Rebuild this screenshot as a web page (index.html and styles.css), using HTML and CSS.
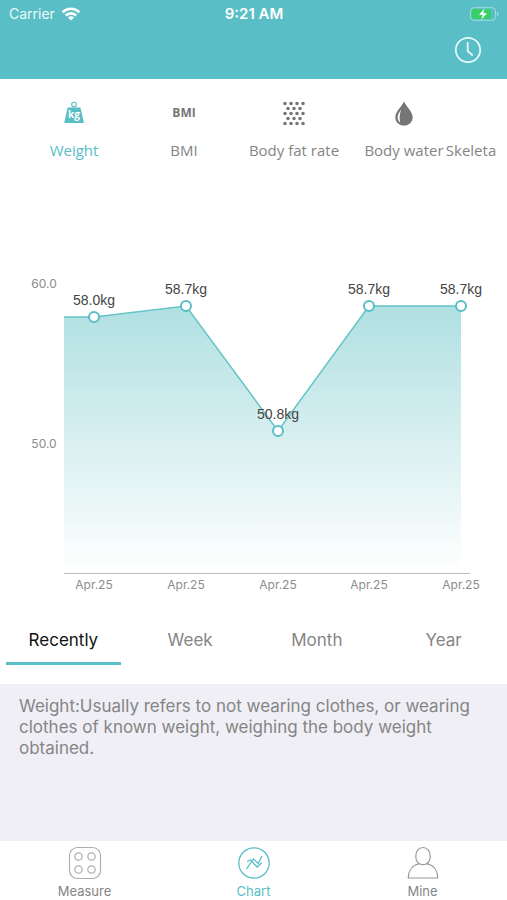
FILE: index.html
```html
<!DOCTYPE html>
<html lang="en">
<head>
    <meta charset="UTF-8">
    <meta name="viewport" content="width=device-width, initial-scale=1.0">
    <title>Chart</title>
    <link rel="stylesheet" href="styles.css">
</head>
<body>
<header class="header">
    <div class="status-bar">
        <div class="carrier">
            <span>Carrier</span>
            <svg width="20" height="16" viewBox="0 0 20 16" fill="none" stroke="#fff" stroke-width="2.6">
                <path d="M1.6 6.2a12 12 0 0 1 16.8 0"/>
                <path d="M4.7 9.5a7.6 7.6 0 0 1 10.6 0"/>
                <path d="M10 14.6l-3-3a4.3 4.3 0 0 1 6 0z" fill="#fff" stroke="none"/>
            </svg>
        </div>
        <div class="time">9:21 AM</div>
        <div class="battery">
            <svg width="30" height="14" viewBox="0 0 30 14">
                <rect x="1.5" y="0.7" width="25" height="12.6" rx="3.4" fill="none" stroke="#a3dbe0"/>
                <rect x="2.5" y="2" width="19.5" height="10" rx="2" fill="#36cf68"/>
                <path d="M28 4.5c2 .8 2 4.2 0 5z" fill="#a3dbe0"/>
                <path d="M15.6 1.5L10 7.7h3.6l-1.200 4.8L18 6.300h-3.600z" fill="#fff"/>
            </svg>
        </div>
    </div>
    <div class="toolbar">
        <button class="history" type="button" aria-label="History">
            <svg width="28" height="28" viewBox="0 0 28 28" fill="none" stroke="#e9fafb" stroke-width="1.7">
                <circle cx="14" cy="14" r="12.2"/>
                <path d="M13.700 6v9l5 4.500"/>
            </svg>
        </button>
    </div>
</header>

<nav class="metrics">
    <button class="metric active" type="button">
        <svg width="28" height="28" viewBox="0 0 28 28">
            <circle cx="14" cy="5.5" r="2.300" fill="none" stroke="currentColor" stroke-width="1.1"/>
            <path d="M7.6 8.500h12.800L24 24H4.200z" fill="currentColor"/>
            <text class="kg" x="14" y="19" text-anchor="middle">kg</text>
        </svg>
        <span>Weight</span>
    </button>
    <button class="metric" type="button">
        <b class="bmi">BMI</b>
        <span>BMI</span>
    </button>
    <button class="metric" type="button">
        <svg width="28" height="28" viewBox="0 0 28 28" fill="none" stroke="#757575" stroke-width="3.6" stroke-linecap="round">
            <path d="M5 4.500h19M5 14.500h19M5 24.500h19" stroke-dasharray="0 6"/>
            <path d="M8 9.500h13M8 19.500h13" stroke-dasharray="0 6"/>
        </svg>
        <span>Body fat rate</span>
    </button>
    <button class="metric" type="button">
        <svg width="28" height="28" viewBox="0 0 28 28">
            <path d="M14 2.500C11.500 8 5.300 12.700 5.300 18.200c0 5 3.900 8.300 8.700 8.300s8.700-3.300 8.700-8.300C22.700 12.700 16.500 8 14 2.500z" fill="#757575"/>
            <path d="M11.200 10.500C8.600 14.200 7.400 16.500 7.700 19.200c.2 2 1.200 3.500 2.600 4.400-1.300-4.200-.7-8 .9-13.100z" fill="#fff"/>
        </svg>
        <span>Body water</span>
    </button>
    <button class="metric" type="button">
        <span>Skeleta</span>
    </button>
</nav>

<main>
    <svg class="chart" viewBox="0 0 507 440" role="img" aria-label="Weight chart">
        <defs>
            <linearGradient id="fill" x1="0" y1="0" x2="0" y2="1">
                <stop offset="0" stop-color="#b0e0e2"/>
                <stop offset="0.5" stop-color="#d8eff0"/>
                <stop offset="1" stop-color="#ffffff"/>
            </linearGradient>
        </defs>
        <path d="M64 147L94 147L186 136L278 261L369 136L461 136V402H64z" fill="url(#fill)"/>
        <path class="axis" d="M64 403H470"/>
        <path class="line" d="M64 147L94 147L186 136L278 261L369 136L461 136"/>
        <g class="dots">
            <circle cx="94" cy="147" r="5"/>
            <circle cx="186" cy="136" r="5"/>
            <circle cx="278" cy="261" r="5"/>
            <circle cx="369" cy="136" r="5"/>
            <circle cx="461" cy="136" r="5"/>
        </g>
        <g class="values">
            <text x="94" y="135">58.0kg</text>
            <text x="186" y="124">58.7kg</text>
            <text x="278" y="249">50.8kg</text>
            <text x="369" y="124">58.7kg</text>
            <text x="461" y="124">58.7kg</text>
        </g>
        <g class="scale">
            <text x="44" y="118">60.0</text>
            <text x="44" y="278">50.0</text>
            <text x="94" y="419">Apr.25</text>
            <text x="186" y="419">Apr.25</text>
            <text x="278" y="419">Apr.25</text>
            <text x="369" y="419">Apr.25</text>
            <text x="461" y="419">Apr.25</text>
        </g>
    </svg>

    <div class="periods">
        <button class="period active" type="button">Recently</button>
        <button class="period" type="button">Week</button>
        <button class="period" type="button">Month</button>
        <button class="period" type="button">Year</button>
    </div>

    <p class="description">Weight:Usually refers to not wearing clothes, or wearing clothes of known weight, weighing the body weight obtained.</p>
</main>

<nav class="tab-bar">
    <a class="tab" href="#">
        <svg width="34" height="34" viewBox="0 0 34 34" fill="none" stroke="#adadad" stroke-width="1.2">
            <rect x="1.5" y="1.5" width="31" height="31" rx="8"/>
            <circle cx="10.5" cy="10.5" r="3.7"/>
            <circle cx="23.5" cy="10.5" r="3.7"/>
            <circle cx="10.5" cy="23.5" r="3.7"/>
            <circle cx="23.5" cy="23.5" r="3.7"/>
        </svg>
        <span>Measure</span>
    </a>
    <a class="tab active" href="#">
        <svg width="34" height="34" viewBox="0 0 34 34" fill="none" stroke="currentColor" stroke-width="1.3">
            <circle cx="17" cy="17" r="15.2"/>
            <path d="M9.500 23l6.800-10 5 4.500L25 10"/>
            <path d="M10 15.500l3.500-1.500 6.500 7 5-4.500"/>
        </svg>
        <span>Chart</span>
    </a>
    <a class="tab" href="#">
        <svg width="34" height="34" viewBox="0 0 34 34" fill="none" stroke="#999" stroke-width="1.2">
            <path d="M13.500 17.700C11 16.500 9.800 13.500 9.800 10c0-5 3-8.500 7.200-8.500s7.200 3.500 7.200 8.500c0 3.500-1.200 6.500-3.700 7.700"/>
            <path d="M13.500 17.700C6.500 19 2.300 24.500 2.300 32h29.400c0-7.500-4.200-13-11.200-14.300-2.200 1.200-4.800 1.200-7 0z"/>
        </svg>
        <span>Mine</span>
    </a>
</nav>
</body>
</html>
```
FILE: styles.css
```css
* {
    box-sizing: border-box;
}
body {
    min-height: 100vh;
    margin: 0;
    font-family: Inter, "Liberation Sans", sans-serif;
    background-color: #fff;
    color: #858585;
    display: flex;
    flex-direction: column;
}
button {
    padding: 0;
    border: 0;
    background: none;
    font: inherit;
    color: inherit;
    cursor: pointer;
}
svg {
    display: block;
}
.header {
    background-color: #59bec5;
    color: #fff;
}
.status-bar {
    display: grid;
    grid-template-columns: 1fr auto 1fr;
    align-items: center;
    height: 27px;
    padding: 0 8px 0 9px;
    font-size: 14px;
}
.carrier {
    display: flex;
    align-items: center;
    gap: 6px;
    color: #e9fafb;
}
.time {
    font-size: 15px;
    font-weight: 600;
}
.battery {
    justify-self: end;
}
.toolbar {
    display: flex;
    justify-content: flex-end;
    padding: 9px 25px 15px;
}
.metrics {
    display: grid;
    grid-template-columns: repeat(4, minmax(0, 110fr)) minmax(0, 24fr);
    padding: 20px 24px 9px 19px;
    font-family: "Open Sans", "Noto Sans", sans-serif;
    font-size: 15px;
    line-height: 22px;
}
.metric {
    display: flex;
    flex-direction: column;
    justify-content: flex-end;
    align-items: center;
    gap: 12px;
    height: 62px;
    white-space: nowrap;
}
.metric.active,
.tab.active {
    color: #59bec5;
}
.kg {
    fill: #fff;
    font-size: 10px;
    font-weight: bold;
}
.bmi {
    font-size: 12px;
    line-height: 28px;
    color: #757575;
}
main {
    flex: 1;
    display: flex;
    flex-direction: column;
}
.chart {
    width: 100%;
    height: auto;
}
.axis {
    stroke: #bdbdbd;
    shape-rendering: crispEdges;
}
.line {
    fill: none;
    stroke: #65c4c5;
    stroke-width: 1.5;
}
.dots {
    fill: #fff;
    stroke: #59bec5;
    stroke-width: 2;
}
.values {
    font-family: "Liberation Sans", sans-serif;
    font-size: 14px;
    fill: #444;
    text-anchor: middle;
}
.scale {
    font-size: 12px;
    fill: #8c8c8c;
    text-anchor: middle;
}
.periods {
    display: grid;
    grid-template-columns: repeat(4, 1fr);
    padding-bottom: 19px;
}
.period {
    height: 55px;
    margin: 0 6px;
    padding-top: 8px;
    border-bottom: 3px solid transparent;
    font-size: 17px;
}
.period.active {
    border-color: #59bec5;
    color: #111;
}
.description {
    flex: 1;
    margin: 0;
    padding: 12px 19px;
    background-color: #f0eff5;
    font-size: 17px;
    line-height: 21px;
}
.tab-bar {
    display: grid;
    grid-template-columns: repeat(3, 1fr);
    padding-top: 5px;
    height: 59px;
}
.tab {
    display: flex;
    flex-direction: column;
    align-items: center;
    gap: 3px;
    font-size: 13px;
    line-height: 16px;
    color: inherit;
    text-decoration: none;
}
```
